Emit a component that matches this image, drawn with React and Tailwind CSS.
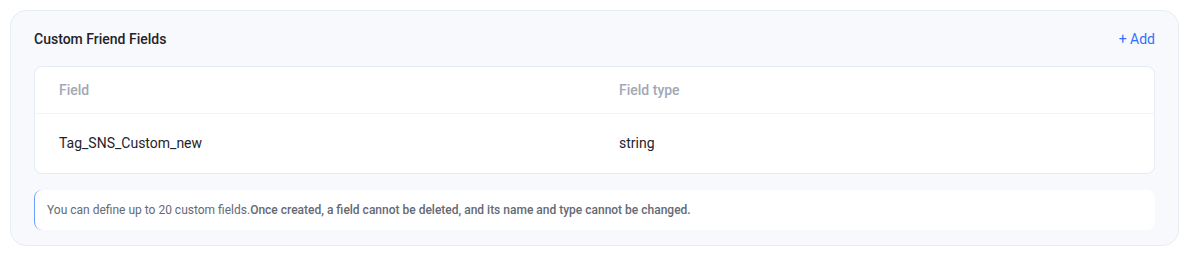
export default function App() {
  return (
    <div className="bg-white w-[1196px] h-[258px] pt-[10px] pl-[10px]" style={{ fontFamily: "Roboto, 'Noto Sans', sans-serif" }}>
      <div className="w-[1169px] rounded-[16px] border border-[#e9edf5] bg-[#f8f9fd] px-[23px] pt-[17px] pb-[15px]">
        <div className="flex items-center justify-between h-[22px]">
          <div className="text-[14px] font-medium text-[#1f2329] leading-[22px]">Custom Friend Fields</div>
          <div className="text-[14px] text-[#3370ff] leading-[22px]">+ Add</div>
        </div>
        <div className="mt-[16px] rounded-[8px] border border-[#e6ebf5] bg-white">
          <div className="flex h-[47px] items-center border-b border-[#f2f4f8] text-[14px] font-medium text-[#a2a8b6]">
            <div className="w-[584px] pl-[24px]">Field</div>
            <div>Field type</div>
          </div>
          <div className="flex h-[59px] items-center text-[14px] text-[#1f2329]">
            <div className="w-[584px] pl-[24px]">Tag_SNS_Custom_new</div>
            <div>string</div>
          </div>
        </div>
        <div className="mt-[16px] h-[40px] flex items-center rounded-[8px] border-l border-[#6f9cff] bg-white pl-[12px] text-[12px] text-[#646a73]">
          <span>You can define up to 20 custom fields.</span>
          <span className="font-medium">Once created, a field cannot be deleted, and its name and type cannot be changed.</span>
        </div>
      </div>
    </div>
  );
}
